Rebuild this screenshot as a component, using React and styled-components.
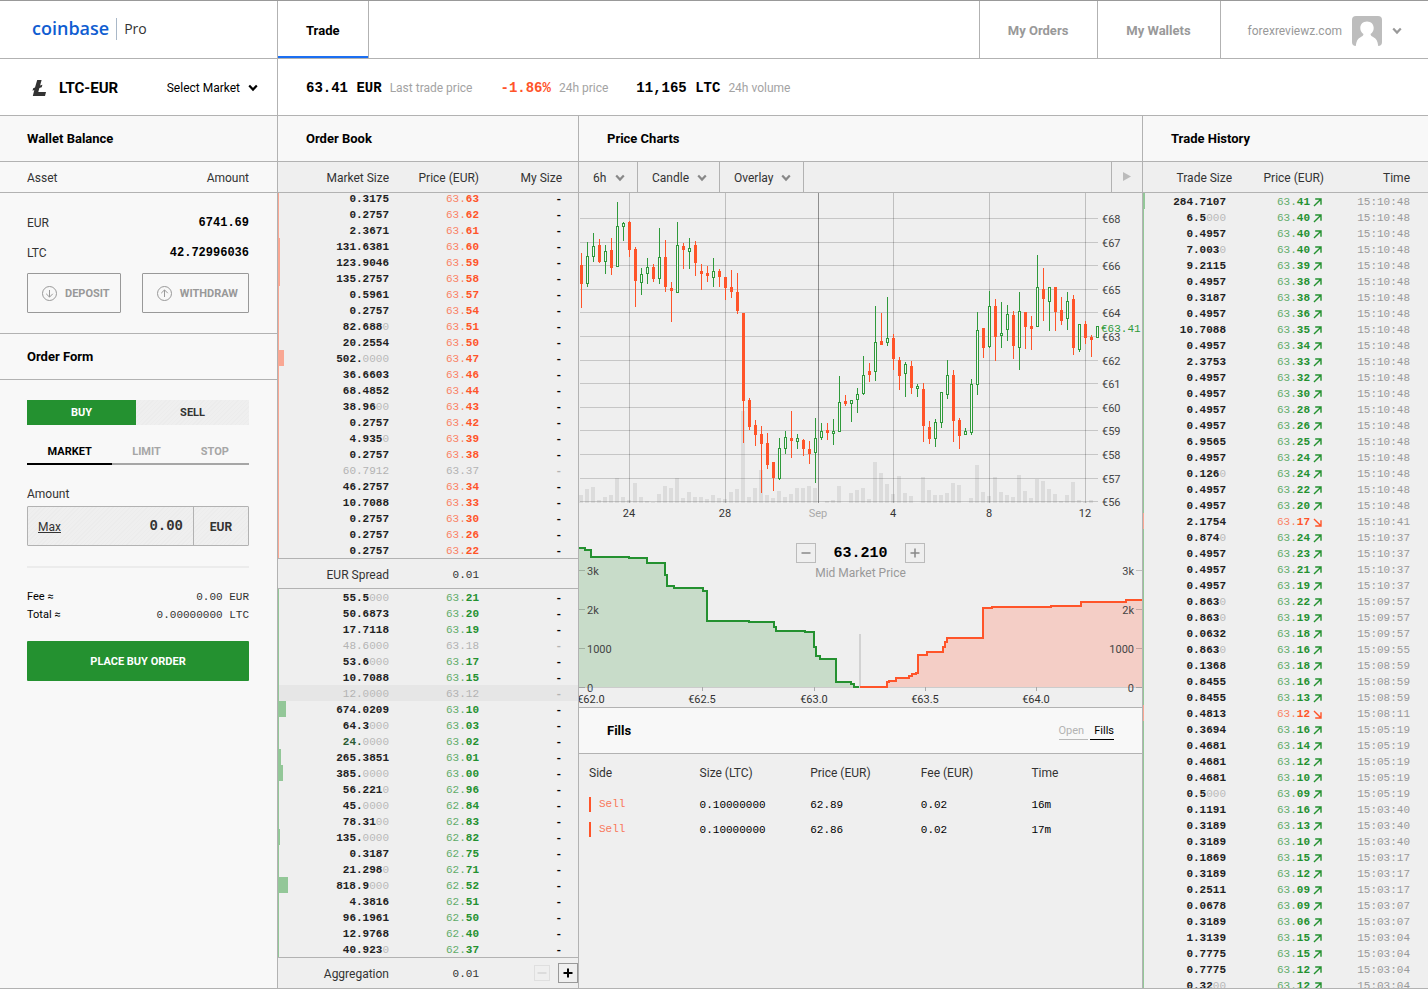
import React, { useState } from "react";
import styled, { createGlobalStyle } from "styled-components";

const line = "#b2b2b2";
const green = "#249130";
const red = "#ff5429";
const sans = `Roboto, "Liberation Sans", sans-serif`;
const mono = `"Liberation Mono", monospace`;

const GlobalStyle = createGlobalStyle`
  * {
    box-sizing: border-box;
  }
  body {
    margin: 0;
    background: #fff;
    color: #333;
    font-family: ${sans};
    font-size: 12px;
    line-height: 16px;
  }
  button, input, select {
    margin: 0;
    padding: 0;
    border: 0;
    border-radius: 0;
    background: none;
    color: inherit;
    font: inherit;
  }
  button {
    cursor: pointer;
  }
  h1, h2, p {
    margin: 0;
  }
  table {
    width: 100%;
    table-layout: fixed;
    border-collapse: collapse;
  }
  th, td {
    padding: 0;
    font-weight: 400;
    text-align: left;
  }
`;

const Page = styled.div`
  display: flex;
  flex-direction: column;
  height: 100vh;
  padding-bottom: 2px;
`;

const TopBar = styled.header`
  display: flex;
  flex: none;
  height: 59px;
  border-top: 1px solid #999;
  border-bottom: 1px solid ${line};
`;

const Brand = styled.a`
  display: flex;
  align-items: center;
  width: 278px;
  padding: 0 0 2px 32px;
  border-right: 1px solid ${line};
  font-family: "Open Sans", sans-serif;
  text-decoration: none;
`;

const BrandName = styled.span`
  margin-bottom: 2px;
  color: #0f5dd1;
  font-size: 18px;
  font-weight: 600;
`;

const BrandTier = styled.span`
  margin-left: 7px;
  padding-left: 7px;
  border-left: 1px solid #a9b8c8;
  color: #333;
  font-size: 14px;
  line-height: 22px;
`;

const NavLink = styled.a`
  display: flex;
  align-items: center;
  padding: 2px 29px 0 28px;
  border-left: ${(p) => (p.$active ? 0 : 1)}px solid ${line};
  border-right: ${(p) => (p.$active ? 1 : 0)}px solid ${line};
  color: ${(p) => (p.$active ? "#000" : "#999")};
  box-shadow: ${(p) => (p.$active ? "inset 0 -2px #1b6ff2" : "none")};
  font-size: 13px;
  font-weight: 700;
  text-decoration: none;
`;

const Spacer = styled.div`
  flex: 1;
`;

const UserMenu = styled.button`
  display: flex;
  align-items: center;
  gap: 10px;
  padding: 2px 26px 0 27px;
  border-left: 1px solid ${line};
  color: #999;
`;

const MarketBar = styled.section`
  display: flex;
  flex: none;
  height: 57px;
  border-bottom: 1px solid ${line};
`;

const MarketPicker = styled.div`
  display: flex;
  align-items: center;
  width: 278px;
  padding: 2px 19px 0 32px;
  border-right: 1px solid ${line};
`;

const MarketName = styled.h1`
  flex: 1;
  margin-left: 12px;
  color: #000;
  font-size: 15px;
  font-weight: 700;
`;

const SelectMarket = styled.button`
  display: flex;
  align-items: center;
  gap: 8px;
  color: #000;
`;

const Stats = styled.div`
  display: flex;
  align-items: center;
  gap: 28px;
  padding: 2px 0 0 28px;
`;

const Stat = styled.div`
  display: flex;
  align-items: center;
  gap: 8px;
  color: #a3a3a3;
`;

const StatValue = styled.strong`
  color: ${(p) => (p.$down ? red : "#000")};
  font-family: ${mono};
  font-size: 14px;
`;

const Columns = styled.main`
  display: grid;
  flex: 1;
  grid-template-columns: 278px 301px minmax(0, 1fr) 286px;
  grid-template-rows: minmax(0, 1fr);
  min-height: 0;
  border-bottom: 1px solid ${line};
`;

const Panel = styled.section`
  display: flex;
  flex-direction: column;
  min-width: 0;
  overflow: hidden;
  border-left: ${(p) => (p.$edge === "left" ? 1 : 0)}px solid ${line};
  border-right: ${(p) => (p.$edge === "right" ? 1 : 0)}px solid ${line};
  background: ${(p) => (p.$light ? "#f8f8f8" : "#efefef")};
`;

const PanelHeader = styled.div`
  display: flex;
  flex: none;
  align-items: center;
  justify-content: space-between;
  height: ${(p) => (p.$divided ? 47 : 46)}px;
  padding: 0 28px 0 ${(p) => (p.$narrow ? 27 : 28)}px;
  border-top: ${(p) => (p.$divided ? 1 : 0)}px solid ${line};
  border-bottom: 1px solid ${line};
  background: #f8f8f8;
`;

const PanelTitle = styled.h2`
  color: #000;
  font-size: 13px;
  font-weight: 700;
`;

const ColumnHeads = styled.div`
  display: grid;
  flex: none;
  grid-template-columns: ${(p) => p.$cols};
  align-items: center;
  height: 31px;
  padding: ${(p) => p.$pad || "2px 0 0"};
  border-bottom: 1px solid ${line};
  text-align: right;

  span:first-child {
    text-align: ${(p) => p.$first || "right"};
  }
`;

const Wallet = styled.div`
  padding: 14px 28px 20px 27px;
`;

const WalletRow = styled.div`
  display: flex;
  align-items: center;
  justify-content: space-between;
  height: 30px;
  padding-top: 1px;
`;

const WalletAmount = styled.strong`
  color: #000;
  font-family: ${mono};
  font-size: 12px;
`;

const Transfers = styled.div`
  display: flex;
  justify-content: space-between;
  margin-top: 6px;
`;

const TransferButton = styled.button`
  display: flex;
  align-items: center;
  gap: 8px;
  height: 40px;
  padding: 1px 10px 0 14px;
  border: 1px solid #999;
  border-radius: 1px;
  color: #999;
  font-size: 11px;
  font-weight: 700;
`;

const hatch = `repeating-linear-gradient(135deg, #ececec 0, #ececec 1px, #efefef 1px, #efefef 3px)`;

const Form = styled.form`
  padding: 20px 28px 0 27px;
`;

const Sides = styled.div`
  display: flex;
`;

const SideButton = styled.button`
  flex: 1 1 auto;
  height: 25px;
  padding-top: 1px;
  background: ${(p) => (p.$active ? green : hatch)};
  color: ${(p) => (p.$active ? "#fff" : "#333")};
  font-size: 11px;
  font-weight: 700;
`;

const OrderTypes = styled.div`
  display: flex;
  margin-top: 12px;
`;

const OrderType = styled.button`
  flex: ${(p) => (p.$active ? 5 : 4)} 1 0;
  height: 28px;
  padding-top: 3px;
  border-bottom: 2px solid ${(p) => (p.$active ? "#000" : "#a6a6a6")};
  color: ${(p) => (p.$active ? "#000" : "#a6a6a6")};
  font-size: 11px;
  font-weight: 700;
`;

const FieldLabel = styled.label`
  display: block;
  margin: 21px 0 4px;
`;

const Field = styled.div`
  display: flex;
  align-items: center;
  height: 40px;
  border: 1px solid ${line};
  border-radius: 1px;
  background: ${hatch};
`;

const MaxButton = styled.button`
  margin-left: 10px;
  padding-top: 2px;
  text-decoration: underline;
`;

const AmountInput = styled.input`
  flex: 1;
  min-width: 0;
  padding-right: 10px;
  font-family: ${mono};
  font-size: 14px;
  font-weight: 700;
  text-align: right;
`;

const Unit = styled.span`
  width: 55px;
  padding-top: 2px;
  border-left: 1px solid ${line};
  font-weight: 700;
  line-height: 36px;
  text-align: center;
`;

const Rule = styled.hr`
  height: 2px;
  margin: 20px 0 20px;
  border: 0;
  background: #ececec;
`;

const Total = styled.div`
  display: flex;
  justify-content: space-between;
  color: #000;
  font-size: 11px;
  line-height: 18px;
`;

const TotalValue = styled.span`
  color: #333;
  font-family: ${mono};
`;

const Submit = styled.button`
  width: 100%;
  height: 40px;
  margin-top: 17px;
  padding-top: 1px;
  border-radius: 1px;
  background: ${green};
  color: #fff;
  font-size: 11px;
  font-weight: 700;
`;

const BookSide = styled.div`
  display: flex;
  flex: ${(p) => (p.$fill ? "1 1 0" : "none")};
  flex-direction: column;
  justify-content: flex-end;
  min-height: 0;
  overflow: hidden;
`;

const NumberTable = styled.table`
  flex: none;
  font-family: ${mono};
  font-size: 11px;

  td {
    height: 16px;
    padding-top: 2px;
    line-height: 14px;
    text-align: right;
  }
  td:first-child {
    padding-top: 0;
  }
`;

const NumberRow = styled.tr`
  background: ${(p) => (p.$hover ? "#e6e6e6" : "none")};
`;

const Bar = styled.div`
  height: 16px;
  background: ${(p) => (p.$ask ? "#f9a793" : "#93c798")};
`;

const Size = styled.span`
  color: ${(p) => (p.$muted ? "#b3b3b3" : p.$fresh ? "#2c5c33" : "#222")};
  font-weight: ${(p) => (p.$muted ? 400 : 700)};
`;

const Zeros = styled.span`
  color: #b9b9b9;
  font-weight: 400;
`;

const Price = styled.span`
  color: ${(p) => (p.$muted ? "#b3b3b3" : p.$ask ? red : green)};
  font-weight: ${(p) => (p.$muted ? 400 : 700)};
`;

const Whole = styled.span`
  font-weight: 400;
  opacity: 0.7;
`;

const Dash = styled.span`
  color: ${(p) => (p.$muted ? "#b3b3b3" : "#000")};
  font-weight: 700;
`;

const BookFooter = styled.div`
  display: grid;
  flex: none;
  grid-template-columns: 111px 90px 1fr;
  align-items: center;
  height: 31px;
  border-top: 1px solid ${line};
  border-bottom: ${(p) => (p.$closed ? 1 : 0)}px solid ${line};
  text-align: right;

  span {
    padding-top: 2px;
  }
`;

const Mono = styled.span`
  font-family: ${mono};
  font-size: 11px;
`;

const Steps = styled.div`
  display: flex;
  justify-content: flex-end;
  gap: 8px;
`;

const StepButton = styled.button`
  display: flex;
  align-items: center;
  justify-content: center;
  width: 20px;
  height: 20px;
  border: 1px solid ${(p) => p.$border || "#bbb"};
  color: ${(p) => p.$color || "#888"};

  &:disabled {
    width: 16px;
    height: 16px;
    margin: 2px 0;
    border-color: #dfdfdf;
    color: #d6d6d6;
  }
`;

const Toolbar = styled.div`
  display: flex;
  flex: none;
  height: 31px;
  border-bottom: 1px solid ${line};
`;

const Picker = styled.label`
  display: flex;
  align-items: center;
  width: ${(p) => p.$width}px;
  padding: 1px 12px 0 14px;
  border-right: 1px solid ${line};
  color: #888;
`;

const PickerSelect = styled.select`
  flex: 1;
  min-width: 0;
  padding-top: 1px;
  appearance: none;
  color: #333;
  outline: none;
`;

const PlayButton = styled.button`
  width: 31px;
  border-left: 1px solid ${line};
  color: #bbb;
`;

const Chart = styled.svg`
  display: block;
  flex: none;
  width: 100%;
  height: auto;
  font-family: ${sans};
  font-size: 11px;
`;

const DepthBox = styled.div`
  position: relative;
  flex: none;
`;

const MidPrice = styled.div`
  position: absolute;
  top: 20px;
  left: 0;
  right: 0;
  color: #999;
  text-align: center;
`;

const MidRow = styled.div`
  display: flex;
  align-items: center;
  justify-content: center;
  gap: 17px;
  margin-bottom: 2px;
`;

const MidValue = styled.strong`
  padding-top: 2px;
  color: #000;
  font-family: ${mono};
  font-size: 15px;
`;

const FillTabs = styled.div`
  display: flex;
  gap: 2px;
`;

const FillTab = styled.button`
  padding: 1px ${(p) => (p.$active ? 0 : 4)}px 0 ${(p) => (p.$active ? 4 : 0)}px;
  border-bottom: 1px solid ${(p) => (p.$active ? "#000" : "#b9b9b9")};
  color: ${(p) => (p.$active ? "#000" : "#b3b3b3")};
  font-size: 11px;
`;

const FillsTable = styled.table`
  width: calc(100% - 10px);
  margin-left: 10px;

  th {
    height: 38px;
  }
  td {
    height: 25px;
    color: #000;
    font-family: ${mono};
    font-size: 11px;
  }
`;

const SellMark = styled.span`
  display: block;
  padding-left: 8px;
  border-left: 2px solid ${red};
  color: #f9785a;
  line-height: 15px;
`;

const Time = styled.span`
  color: #999;
`;

const TradePrice = styled.div`
  display: flex;
  align-items: center;
  justify-content: flex-end;
  gap: 3px;
`;

const asks = [
  ["0.3175", "63.63"], ["0.2757", "63.62"], ["2.3671", "63.61"],
  ["131.6381", "63.60", 2], ["123.9046", "63.59", 2], ["135.2757", "63.58", 2],
  ["0.5961", "63.57"], ["0.2757", "63.54"], ["82.6880", "63.51"],
  ["20.2554", "63.50"], ["502.0000", "63.47", 6], ["36.6603", "63.46"],
  ["68.4852", "63.44"], ["38.9600", "63.43"], ["0.2757", "63.42"],
  ["4.9350", "63.39"], ["0.2757", "63.38"], ["60.7912", "63.37", 1, "muted"],
  ["46.2757", "63.34"], ["10.7088", "63.33"], ["0.2757", "63.30"],
  ["0.2757", "63.26"], ["0.2757", "63.22"],
];

const bids = [
  ["55.5000", "63.21"], ["50.6873", "63.20"], ["17.7118", "63.19"],
  ["48.6000", "63.18", 1, "muted"], ["53.6000", "63.17"], ["10.7088", "63.15"],
  ["12.0000", "63.12", 1, "hover"], ["674.0209", "63.10", 8], ["64.3000", "63.03"],
  ["24.0000", "63.02", 1, "fresh"], ["265.3851", "63.01", 3], ["385.0000", "63.00", 5],
  ["56.2210", "62.96"], ["45.0000", "62.84"], ["78.3100", "62.83"],
  ["135.0000", "62.82", 2], ["0.3187", "62.75"], ["21.2980", "62.71"],
  ["818.9000", "62.52", 10], ["4.3816", "62.51"], ["96.1961", "62.50", 1],
  ["12.9768", "62.40"], ["40.9230", "62.37"],
];

const trades = [
  ["284.7107", "63.41", "15:10:48"], ["6.5000", "63.40", "15:10:48"],
  ["0.4957", "63.40", "15:10:48"], ["7.0030", "63.40", "15:10:48"],
  ["9.2115", "63.39", "15:10:48"], ["0.4957", "63.38", "15:10:48"],
  ["0.3187", "63.38", "15:10:48"], ["0.4957", "63.36", "15:10:48"],
  ["10.7088", "63.35", "15:10:48"], ["0.4957", "63.34", "15:10:48"],
  ["2.3753", "63.33", "15:10:48"], ["0.4957", "63.32", "15:10:48"],
  ["0.4957", "63.30", "15:10:48"], ["0.4957", "63.28", "15:10:48"],
  ["0.4957", "63.26", "15:10:48"], ["6.9565", "63.25", "15:10:48"],
  ["0.4957", "63.24", "15:10:48"], ["0.1260", "63.24", "15:10:48"],
  ["0.4957", "63.22", "15:10:48"], ["0.4957", "63.20", "15:10:48"],
  ["2.1754", "63.17", "15:10:41", true], ["0.8740", "63.24", "15:10:37"],
  ["0.4957", "63.23", "15:10:37"], ["0.4957", "63.21", "15:10:37"],
  ["0.4957", "63.19", "15:10:37"], ["0.8630", "63.22", "15:09:57"],
  ["0.8630", "63.19", "15:09:57"], ["0.0632", "63.18", "15:09:57"],
  ["0.8630", "63.16", "15:09:55"], ["0.1368", "63.18", "15:08:59"],
  ["0.8455", "63.16", "15:08:59"], ["0.8455", "63.13", "15:08:59"],
  ["0.4813", "63.12", "15:08:11", true], ["0.3694", "63.16", "15:05:19"],
  ["0.4681", "63.14", "15:05:19"], ["0.4681", "63.12", "15:05:19"],
  ["0.4681", "63.10", "15:05:19"], ["0.5000", "63.09", "15:05:19"],
  ["0.1191", "63.16", "15:03:40"], ["0.3189", "63.13", "15:03:40"],
  ["0.3189", "63.10", "15:03:40"], ["0.1869", "63.15", "15:03:17"],
  ["0.3189", "63.12", "15:03:17"], ["0.2511", "63.09", "15:03:17"],
  ["0.0678", "63.09", "15:03:07"], ["0.3189", "63.06", "15:03:07"],
  ["1.3139", "63.15", "15:03:04"], ["0.7775", "63.15", "15:03:04"],
  ["0.7775", "63.12", "15:03:04"], ["0.3200", "63.12", "15:03:04"],
];

// direction, high, low, body top, body bottom
const candles = [
  ["r", 253, 308, 265, 284], ["g", 242, 287, 256, 284], ["g", 233, 262, 246, 257],
  ["r", 239, 263, 245, 262], ["g", 245, 274, 251, 262], ["r", 238, 275, 250, 268],
  ["g", 202, 267, 226, 267], ["g", 222, 241, 223, 227], ["r", 221, 257, 222, 250],
  ["r", 247, 307, 249, 281], ["g", 268, 295, 274, 283], ["g", 258, 284, 267, 274],
  ["r", 264, 282, 267, 279], ["g", 228, 284, 257, 279], ["r", 240, 292, 257, 287],
  ["r", 282, 322, 288, 291], ["g", 222, 293, 245, 293], ["r", 243, 269, 246, 250],
  ["g", 238, 269, 248, 252], ["r", 241, 276, 245, 263], ["r", 264, 290, 271, 274],
  ["r", 266, 282, 273, 276], ["g", 258, 287, 271, 278], ["r", 269, 287, 271, 277],
  ["r", 277, 300, 277, 288], ["r", 270, 298, 287, 292], ["r", 273, 314, 292, 311],
  ["r", 313, 443, 313, 401], ["r", 398, 430, 400, 427], ["r", 420, 446, 425, 435],
  ["r", 426, 493, 434, 444], ["r", 433, 469, 443, 465], ["r", 462, 491, 462, 478],
  ["g", 438, 480, 448, 479], ["g", 431, 454, 437, 449], ["r", 411, 458, 438, 441],
  ["g", 434, 449, 438, 442], ["r", 439, 456, 440, 449], ["r", 441, 464, 449, 454],
  ["g", 418, 483, 438, 453], ["g", 423, 440, 431, 438], ["r", 423, 440, 430, 433],
  ["g", 419, 445, 431, 434], ["g", 376, 432, 402, 432], ["r", 395, 406, 401, 404],
  ["g", 400, 422, 400, 404], ["g", 388, 413, 394, 400], ["g", 356, 395, 375, 394],
  ["r", 363, 382, 371, 375], ["g", 306, 381, 342, 372], ["r", 313, 345, 341, 345],
  ["g", 297, 346, 338, 343], ["r", 334, 370, 338, 359], ["r", 357, 390, 360, 376],
  ["g", 362, 397, 364, 374], ["r", 361, 394, 366, 388], ["g", 384, 397, 386, 389],
  ["r", 383, 442, 389, 426], ["r", 421, 444, 427, 439], ["g", 419, 447, 422, 439],
  ["g", 392, 428, 392, 423], ["g", 360, 399, 375, 395], ["r", 370, 442, 375, 421],
  ["r", 418, 449, 420, 436], ["g", 428, 435, 431, 435], ["g", 379, 435, 384, 433],
  ["g", 312, 395, 330, 385], ["r", 328, 358, 328, 348], ["g", 291, 348, 306, 347],
  ["r", 299, 361, 306, 337], ["g", 302, 348, 333, 336], ["g", 305, 341, 314, 330],
  ["r", 311, 359, 315, 346], ["g", 292, 370, 311, 348], ["r", 312, 349, 312, 327],
  ["r", 316, 350, 326, 329], ["g", 255, 327, 287, 327], ["r", 268, 321, 289, 299],
  ["g", 287, 331, 287, 302], ["r", 287, 331, 287, 312], ["r", 297, 325, 310, 321],
  ["g", 292, 330, 301, 319], ["r", 295, 355, 299, 348], ["g", 324, 352, 324, 350],
  ["r", 321, 344, 324, 338], ["r", 335, 357, 337, 340], ["g", 326, 338, 326, 338],
];

const volumes = [
  8, 14, 16, 3, 6, 8, 25, 6, 3, 20, 6, 2, 1, 9, 17, 15, 25, 5, 11, 6, 6, 4, 8,
  5, 4, 11, 14, 92, 6, 15, 33, 8, 5, 12, 6, 9, 15, 15, 17, 15, 0, 2, 3, 17, 0,
  10, 13, 15, 4, 41, 30, 19, 9, 27, 10, 7, 0, 26, 13, 8, 8, 10, 20, 18, 0, 5,
  38, 11, 7, 26, 11, 8, 6, 28, 12, 5, 24, 22, 14, 9, 2, 8, 21, 3, 1, 3, 0,
];

const priceLines = [218, 242, 265, 289, 312, 336, 360, 383, 407, 430, 454, 478, 501];
const dateLines = [
  [50, "24"], [146, "28"], [239, "Sep"], [314, "4"], [410, "8"], [506, "12"],
];

const bidDepth =
  "M0 548H6V550H12V557H50V558H68V563H86V575H88V586H95V588H124V591H128V621H170V622H195V627H197V631H226V632H235V647H237V656H241V659H257V682H272V684H275V687H280";
const askDepth =
  "M281 687H308V682H310V681H317V678H330V676H333V674H337V673H339V655H348V652H364V647H366V642H368V638H404V608H413V607H472V606H502V602H547V600H563";

function Chevron() {
  return (
    <svg width="10" height="8" viewBox="0 0 10 8" fill="none" stroke="currentColor" strokeWidth="2.2" aria-hidden="true">
      <path d="M1.2 1.600 5 5.600l3.800-4" />
    </svg>
  );
}

function Arrow({ down }) {
  return (
    <svg width="9" height="9" viewBox="0 0 9 9" fill="none" stroke={down ? red : green} strokeWidth="1.4" aria-hidden="true">
      <path d={down ? "M1 1l6.8 6.8M8 2.2V8H2.2" : "M1 8l6.8-6.8M2.2 1H8v5.8"} />
    </svg>
  );
}

function CircleArrow({ up }) {
  return (
    <svg width="15" height="15" viewBox="0 0 15 15" fill="none" stroke="currentColor" aria-hidden="true">
      <circle cx="7.5" cy="7.5" r="7" />
      <path d={up ? "M7.5 11V4M4.2 7.2l3.3-3.3 3.3 3.3" : "M7.5 4v7M4.2 7.8l3.3 3.3 3.3-3.3"} />
    </svg>
  );
}

function Sign({ plus, bold }) {
  return (
    <svg width="10" height="10" viewBox="0 0 10 10" fill="none" stroke="currentColor" strokeWidth={bold ? 2 : 1.5} aria-hidden="true">
      <path d={plus ? "M0.500 5h9M5 0.500v9" : "M0.500 5h9"} />
    </svg>
  );
}

function Litecoin() {
  return (
    <svg width="15" height="16" viewBox="0 0 15 16" fill="#333" aria-hidden="true">
      <path d="M5.2 0h4.4L8.1 5.6l2.3-.9-.7 2.5-2.3.9-1.100 4H14L13 16H.8l1.500-5.900-1.800.7.7-2.500 1.800-.7z" />
    </svg>
  );
}

function Avatar() {
  return (
    <svg width="30" height="30" viewBox="0 0 30 30" aria-hidden="true">
      <rect width="30" height="30" rx="4" fill="#bdbdbd" />
      <path fill="#fff" d="M15 5.500c4 0 6.700 2.800 6.700 6.600 0 2.700-1.300 4.900-3.200 6 .2 1.700 1.200 2.300 3 3.100 2.800 1.300 4.200 4 4.700 8.800H3.800c.5-4.800 1.900-7.500 4.700-8.800 1.800-.8 2.800-1.400 3-3.100-1.900-1.100-3.200-3.300-3.200-6 0-3.800 2.700-6.600 6.700-6.600z" />
    </svg>
  );
}

function SizeText({ value, state }) {
  const muted = state === "muted" || state === "hover";
  const [, head, zeros] = value.match(/^(.*?\.\d*?)(0*)$/);
  return (
    <Size $muted={muted} $fresh={state === "fresh"}>
      {head}
      {zeros && <Zeros>{zeros}</Zeros>}
    </Size>
  );
}

function PriceText({ value, ask, muted }) {
  if (muted) return <Price $muted>{value}</Price>;
  return (
    <Price $ask={ask}>
      <Whole>{value.slice(0, 3)}</Whole>
      {value.slice(3)}
    </Price>
  );
}

function BookTable({ rows, ask }) {
  return (
    <NumberTable aria-label={ask ? "Asks" : "Bids"}>
      <colgroup>
        <col style={{ width: 20 }} />
        <col style={{ width: 91 }} />
        <col style={{ width: 90 }} />
        <col style={{ width: 83 }} />
        <col />
      </colgroup>
      <tbody>
        {rows.map(([size, price, depth = 1, state]) => {
          const muted = state === "muted" || state === "hover";
          return (
            <NumberRow key={price} $hover={state === "hover"}>
              <td>
                <Bar $ask={ask} style={{ width: depth }} />
              </td>
              <td>
                <SizeText value={size} state={state} />
              </td>
              <td>
                <PriceText value={price} ask={ask} muted={muted} />
              </td>
              <td>
                <Dash $muted={muted}>-</Dash>
              </td>
              <td />
            </NumberRow>
          );
        })}
      </tbody>
    </NumberTable>
  );
}

function OrderForm() {
  const [amount, setAmount] = useState("0.00");
  return (
    <Form onSubmit={(e) => e.preventDefault()}>
      <Sides>
        <SideButton type="button" $active>BUY</SideButton>
        <SideButton type="button">SELL</SideButton>
      </Sides>
      <OrderTypes>
        <OrderType type="button" $active>MARKET</OrderType>
        <OrderType type="button">LIMIT</OrderType>
        <OrderType type="button">STOP</OrderType>
      </OrderTypes>
      <FieldLabel htmlFor="amount">Amount</FieldLabel>
      <Field>
        <MaxButton type="button">Max</MaxButton>
        <AmountInput id="amount" value={amount} onChange={(e) => setAmount(e.target.value)} />
        <Unit>EUR</Unit>
      </Field>
      <Rule />
      <Total>
        Fee ≈<TotalValue>0.00 EUR</TotalValue>
      </Total>
      <Total>
        Total ≈<TotalValue>0.00000000 LTC</TotalValue>
      </Total>
      <Submit>PLACE BUY ORDER</Submit>
    </Form>
  );
}

function ChartPicker({ label, width, options }) {
  return (
    <Picker $width={width}>
      <PickerSelect aria-label={label}>
        {options.map((o) => (
          <option key={o}>{o}</option>
        ))}
      </PickerSelect>
      <Chevron />
    </Picker>
  );
}

function CandleChart() {
  return (
    <Chart viewBox="0 193 563 330" role="img" aria-label="Price chart">
      {volumes.map((v, i) => (
        <rect key={i} x={6 * i} y={503 - v} width="4" height={v} fill="#dcdcdc" />
      ))}
      {priceLines.map((y, i) => (
        <g key={y}>
          <rect x="1" y={y} width="518" height="1" fill="#000" fillOpacity="0.17" />
          <text x="523" y={y + 5} fill="#444">€{68 - i}</text>
        </g>
      ))}
      {dateLines.map(([x, label]) => (
        <g key={label}>
          <rect x={x} y="193" width="1" height="310" fill="#000" fillOpacity={label === "Sep" ? 0.4 : 0.2} />
          <text x={x} y="517" textAnchor="middle" fill={label === "Sep" ? "#aaa" : "#333"}>
            {label}
          </text>
        </g>
      ))}
      {candles.map(([dir, high, low, top, bottom], i) => {
        const color = dir === "g" ? "#2f9a3b" : red;
        const x = 1 + 6 * i;
        return (
          <g key={i}>
            <rect x={x + 1} y={high} width="1" height={low - high} fill={color} />
            <rect x={x} y={top} width="3" height={bottom - top} fill={color} />
            {dir === "g" && (
              <rect x={x + 1} y={top + 1} width="1" height={bottom - top - 2} fill="#f4f4f4" />
            )}
          </g>
        );
      })}
      <rect x="521" y="322" width="42" height="11" fill="#efefef" />
      <text x="522" y="332" fill="#2f9a3b" fontFamily="Liberation Mono, monospace">€63.41</text>
    </Chart>
  );
}

function DepthChart() {
  return (
    <DepthBox>
      <Chart viewBox="0 523 563 184" role="img" aria-label="Depth chart">
        <path d={`${bidDepth}V688H0Z`} fill="#c8dcc9" />
        <path d={`${askDepth}V688H281Z`} fill="#f4cec6" />
        <rect x="0" y="687" width="563" height="1" fill="#ccc" />
        <rect x="280" y="634" width="2" height="53" fill="#d2d2d2" />
        <path d={bidDepth} fill="none" stroke={green} strokeWidth="2" />
        <path d={askDepth} fill="none" stroke={red} strokeWidth="2" />
        {["3k", "2k", "1000", "0"].map((label, i) => {
          const y = 570 + 39 * i;
          return (
            <g key={label} fill="#444">
              <rect x="0" y={y} width="6" height="1" fill="#000" fillOpacity="0.2" />
              <rect x="557" y={y} width="6" height="1" fill="#000" fillOpacity="0.2" />
              <text x="8" y={y + 5}>{label}</text>
              <text x="555" y={y + 5} textAnchor="end">{label}</text>
            </g>
          );
        })}
        {["62.0", "62.5", "63.0", "63.5", "64.0"].map((label, i) => {
          const x = Math.round(12 + 111.25 * i);
          return (
            <g key={label} fill="#333">
              <rect x={x} y="687" width="1" height="4" fill="#aaa" />
              <text x={x} y="703" textAnchor="middle">€{label}</text>
            </g>
          );
        })}
      </Chart>
      <MidPrice>
        <MidRow>
          <StepButton aria-label="Zoom out"><Sign /></StepButton>
          <MidValue>63.210</MidValue>
          <StepButton aria-label="Zoom in"><Sign plus /></StepButton>
        </MidRow>
        Mid Market Price
      </MidPrice>
    </DepthBox>
  );
}

function Fills() {
  return (
    <>
      <PanelHeader $divided>
        <PanelTitle>Fills</PanelTitle>
        <FillTabs>
          <FillTab>Open</FillTab>
          <FillTab $active>Fills</FillTab>
        </FillTabs>
      </PanelHeader>
      <FillsTable>
        <thead>
          <tr>
            <th>Side</th>
            <th>Size (LTC)</th>
            <th>Price (EUR)</th>
            <th>Fee (EUR)</th>
            <th>Time</th>
          </tr>
        </thead>
        <tbody>
          {[["62.89", "16m"], ["62.86", "17m"]].map(([price, time]) => (
            <tr key={time}>
              <td><SellMark>Sell</SellMark></td>
              <td>0.10000000</td>
              <td>{price}</td>
              <td>0.02</td>
              <td>{time}</td>
            </tr>
          ))}
        </tbody>
      </FillsTable>
    </>
  );
}

function TradeHistory() {
  return (
    <NumberTable aria-label="Trade history">
      <colgroup>
        <col style={{ width: 10 }} />
        <col style={{ width: 73 }} />
        <col style={{ width: 96 }} />
        <col style={{ width: 88 }} />
        <col />
      </colgroup>
      <tbody>
        {trades.map(([size, price, time, down], i) => (
          <NumberRow key={i}>
            <td>
              <Bar $ask={down} style={{ width: i === 0 ? 2 : 1 }} />
            </td>
            <td>
              <SizeText value={size} />
            </td>
            <td>
              <TradePrice>
                <PriceText value={price} ask={down} />
                <Arrow down={down} />
              </TradePrice>
            </td>
            <td>
              <Time>{time}</Time>
            </td>
            <td />
          </NumberRow>
        ))}
      </tbody>
    </NumberTable>
  );
}

function App() {
  return (
    <Page>
      <GlobalStyle />
      <TopBar>
        <Brand href="#">
          <BrandName>coinbase</BrandName>
          <BrandTier>Pro</BrandTier>
        </Brand>
        <NavLink href="#trade" $active>Trade</NavLink>
        <Spacer />
        <NavLink href="#orders">My Orders</NavLink>
        <NavLink href="#wallets">My Wallets</NavLink>
        <UserMenu>
          forexreviewz.com
          <Avatar />
          <Chevron />
        </UserMenu>
      </TopBar>

      <MarketBar>
        <MarketPicker>
          <Litecoin />
          <MarketName>LTC-EUR</MarketName>
          <SelectMarket>
            Select Market
            <Chevron />
          </SelectMarket>
        </MarketPicker>
        <Stats>
          <Stat>
            <StatValue>63.41 EUR</StatValue>Last trade price
          </Stat>
          <Stat>
            <StatValue $down>-1.86%</StatValue>24h price
          </Stat>
          <Stat>
            <StatValue>11,165 LTC</StatValue>24h volume
          </Stat>
        </Stats>
      </MarketBar>

      <Columns>
        <Panel $light $edge="right">
          <PanelHeader $narrow>
            <PanelTitle>Wallet Balance</PanelTitle>
          </PanelHeader>
          <ColumnHeads $cols="1fr 1fr" $pad="2px 28px 0 27px" $first="left">
            <span>Asset</span>
            <span>Amount</span>
          </ColumnHeads>
          <Wallet>
            <WalletRow>
              EUR<WalletAmount>6741.69</WalletAmount>
            </WalletRow>
            <WalletRow>
              LTC<WalletAmount>42.72996036</WalletAmount>
            </WalletRow>
            <Transfers>
              <TransferButton><CircleArrow />DEPOSIT</TransferButton>
              <TransferButton><CircleArrow up />WITHDRAW</TransferButton>
            </Transfers>
          </Wallet>
          <PanelHeader $divided $narrow>
            <PanelTitle>Order Form</PanelTitle>
          </PanelHeader>
          <OrderForm />
        </Panel>

        <Panel $edge="right">
          <PanelHeader>
            <PanelTitle>Order Book</PanelTitle>
          </PanelHeader>
          <ColumnHeads $cols="111px 90px 83px">
            <span>Market Size</span>
            <span>Price (EUR)</span>
            <span>My Size</span>
          </ColumnHeads>
          <BookSide $fill>
            <BookTable rows={asks} ask />
          </BookSide>
          <BookFooter $closed>
            <span>EUR Spread</span>
            <Mono>0.01</Mono>
          </BookFooter>
          <BookSide>
            <BookTable rows={bids} />
          </BookSide>
          <BookFooter>
            <span>Aggregation</span>
            <Mono>0.01</Mono>
            <Steps>
              <StepButton disabled aria-label="Decrease aggregation"><Sign /></StepButton>
              <StepButton $border="#999" $color="#000" aria-label="Increase aggregation"><Sign plus bold /></StepButton>
            </Steps>
          </BookFooter>
        </Panel>

        <Panel>
          <PanelHeader>
            <PanelTitle>Price Charts</PanelTitle>
          </PanelHeader>
          <Toolbar>
            <ChartPicker label="Interval" width={59} options={["6h", "1h", "1d"]} />
            <ChartPicker label="Chart type" width={82} options={["Candle", "Line"]} />
            <ChartPicker label="Overlay" width={84} options={["Overlay", "EMA12"]} />
            <Spacer />
            <PlayButton aria-label="Next">
              <svg width="8" height="9" viewBox="0 0 8 9" fill="currentColor" aria-hidden="true">
                <path d="M0 0l8 4.500L0 9z" />
              </svg>
            </PlayButton>
          </Toolbar>
          <CandleChart />
          <DepthChart />
          <Fills />
        </Panel>

        <Panel $edge="left">
          <PanelHeader>
            <PanelTitle>Trade History</PanelTitle>
          </PanelHeader>
          <ColumnHeads $cols="89px 92px 86px">
            <span>Trade Size</span>
            <span>Price (EUR)</span>
            <span>Time</span>
          </ColumnHeads>
          <TradeHistory />
        </Panel>
      </Columns>
    </Page>
  );
}

export default App;
